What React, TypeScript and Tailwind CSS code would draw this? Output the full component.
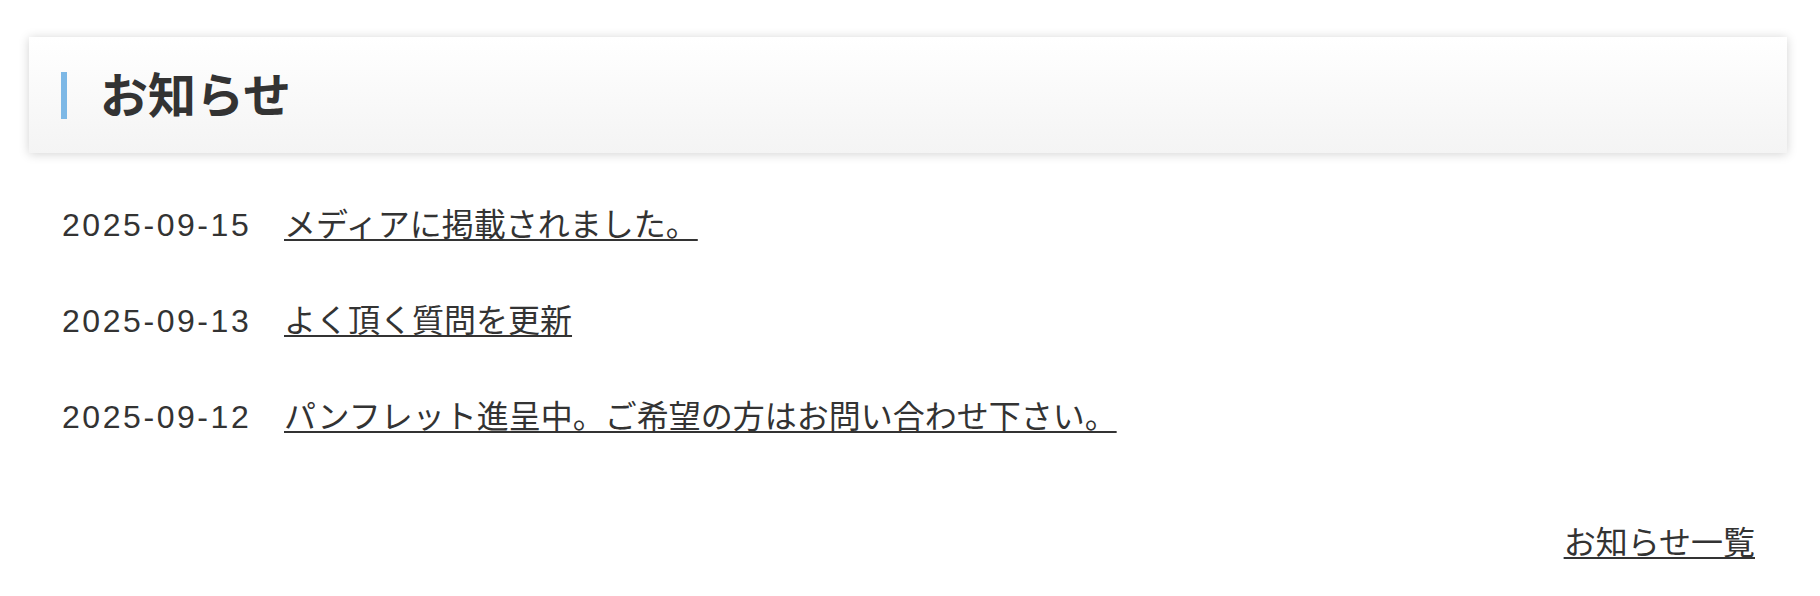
const news = [
  { date: '2025-09-15', title: 'メディアに掲載されました。' },
  { date: '2025-09-13', title: 'よく頂く質問を更新' },
  { date: '2025-09-12', title: 'パンフレット進呈中。ご希望の方はお問い合わせ下さい。' },
];

export default function App() {
  return (
    <div className="min-h-[596px] bg-white text-[#333] font-['Noto_Sans_CJK_JP','Noto_Sans',sans-serif]">
      <div className="pl-[29px] pr-[33px] pt-[37px]">
        {/* Header */}
        <div className="h-[116px] flex items-center bg-gradient-to-b from-white to-[#f4f4f4] shadow-[0_1px_10px_rgba(0,0,0,0.18)]">
          <span className="ml-[32px] w-[6px] h-[47px] bg-[#7db8e6]" />
          <h2 className="ml-[33px] mb-[6px] text-[48px] font-bold leading-none">お知らせ</h2>
        </div>

        {/* List */}
        <ul className="mt-[45px] pl-[33px] flex flex-col gap-[45px]">
          {news.map((n) => (
            <li key={n.date} className="flex items-baseline text-[32px] leading-[48px]">
              <span className="w-[222px] shrink-0 font-['Liberation_Sans',sans-serif] tracking-[0.08em]">{n.date}</span>
              <a href="#" className="underline decoration-2 underline-offset-[3px]">{n.title}</a>
            </li>
          ))}
        </ul>

        <div className="mt-[75px] flex justify-end pr-[32px]">
          <a href="#" className="text-[32px] leading-[48px] underline decoration-2 underline-offset-[3px]">お知らせ一覧</a>
        </div>
      </div>
    </div>
  );
}
